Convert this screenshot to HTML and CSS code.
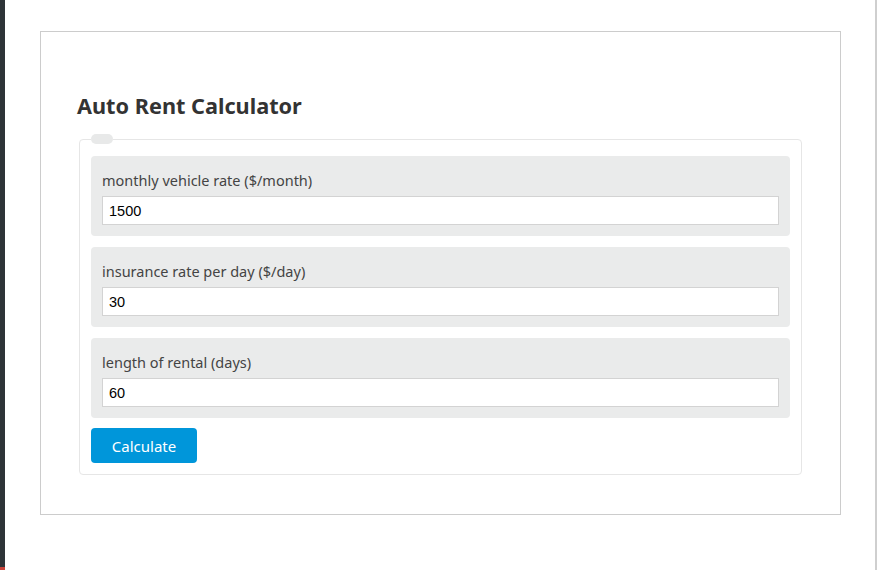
FILE: index.html
```html
<!DOCTYPE html>
<html lang="en">
<head>
    <meta charset="UTF-8">
    <meta name="viewport" content="width=device-width, initial-scale=1.0">
    <title>Auto Rent Calculator</title>
    <link rel="stylesheet" href="styles.css">
</head>
<body>
    <div class="side-bar"><span class="side-mark"></span></div>
    <div class="page">
        <div class="calc-box">
            <h2>Auto Rent Calculator</h2>

            <fieldset class="calc-form">
                <legend></legend>

                <div class="field">
                    <label for="vehicle-rate">monthly vehicle rate ($/month)</label>
                    <input type="text" id="vehicle-rate" value="1500">
                </div>

                <div class="field">
                    <label for="insurance-rate">insurance rate per day ($/day)</label>
                    <input type="text" id="insurance-rate" value="30">
                </div>

                <div class="field">
                    <label for="rental-days">length of rental (days)</label>
                    <input type="text" id="rental-days" value="60">
                </div>

                <button type="button" class="calc-btn">Calculate</button>
            </fieldset>
        </div>
    </div>
</body>
</html>
```

FILE: styles.css
```css
body {
    margin: 0;
    height: 570px;
    display: flex;
    background-color: #fff;
    font-family: 'Noto Sans', 'Open Sans', sans-serif;
    overflow: hidden;
}

.side-bar {
    width: 5px;
    flex-shrink: 0;
    background-color: #2e3438;
    display: flex;
    flex-direction: column;
    justify-content: flex-end;
}

.side-mark {
    height: 3px;
    background-color: #c9433a;
}

.page {
    flex: 1;
    border-right: 2px solid #cfcfcf;
    margin-right: 1px;
    padding: 31px 0 0 35px;
}

.calc-box {
    width: 727px;
    padding: 59px 36px 39px;
    border: 1px solid #cccccc;
}

h2 {
    margin: 0;
    font-size: 21.7px;
    font-weight: 700;
    color: #333;
    line-height: 30px;
}

.calc-form {
    margin: 13px 2px 0;
    padding: 12px 11px 11px;
    border: 1px solid #e6e6e6;
    border-radius: 4px;
}

.calc-form legend {
    width: 22px;
    height: 10px;
    padding: 0;
    margin-left: 0;
    background-color: #e8e9e9;
    border-radius: 5px;
}

.field {
    background-color: #eaebeb;
    border-radius: 4px;
    padding: 11px;
    margin-bottom: 11px;
}

.field:last-of-type {
    margin-bottom: 10px;
}

.field label {
    display: block;
    padding-top: 3px;
    font-size: 14.5px;
    line-height: 20px;
    color: #444;
    margin-bottom: 6px;
}

.field input {
    display: block;
    box-sizing: border-box;
    width: 100%;
    height: 29px;
    padding: 0 6px;
    border: 1px solid #d3d3d3;
    background-color: #fff;
    font-family: 'Liberation Sans', Arial, sans-serif;
    font-size: 14.5px;
    color: #000;
    outline: none;
}

.calc-btn {
    display: block;
    width: 106px;
    height: 35px;
    padding: 0;
    border: none;
    border-radius: 4px;
    background-color: #0096da;
    color: #fff;
    font-family: 'Noto Sans', 'Open Sans', sans-serif;
    font-size: 15px;
    cursor: pointer;
}
```
